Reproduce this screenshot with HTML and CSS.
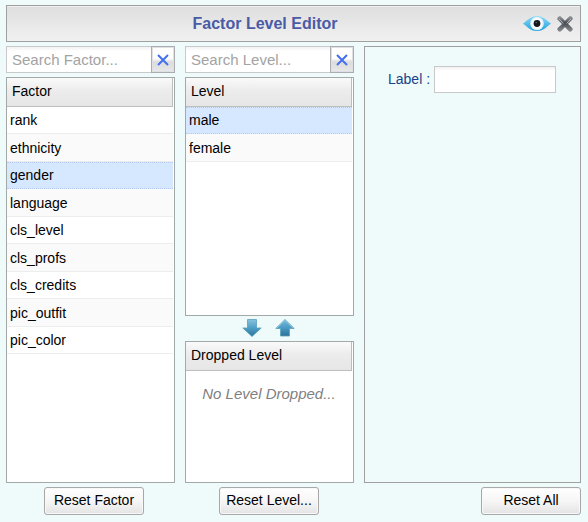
FILE: index.html
```html
<!DOCTYPE html>
<html lang="en">
<head>
<meta charset="utf-8">
<title>Factor Level Editor</title>
<link rel="stylesheet" href="styles.css">
</head>
<body>
<div class="editor">
  <header class="titlebar">
    <h1 class="title">Factor Level Editor</h1>
    <div class="tools">
      <button class="icon-button" type="button" aria-label="Preview">
        <svg width="28" height="18" viewBox="0 0 28 18">
          <defs><linearGradient id="eye" x1="0" y1="0" x2="0" y2="1"><stop offset="0" stop-color="#8fdcf8"/><stop offset="1" stop-color="#1fa0dc"/></linearGradient></defs>
          <path d="M0 8.500C5 5 8 1 14 1s9 4 14 7.500c-5 4-8 7.500-14 7.500S5 12.500 0 8.500z" fill="url(#eye)"/>
          <circle cx="14" cy="8.5" r="6.8" fill="#e0f0f7"/>
          <circle cx="14" cy="8.5" r="5.6" fill="#fafdff"/>
          <circle cx="14" cy="8.5" r="3.4" fill="#15191c"/>
          <circle cx="13.200" cy="7.500" r="0.7" fill="#6e767a"/>
        </svg>
      </button>
      <button class="icon-button" type="button" aria-label="Close">
        <svg width="16" height="16" viewBox="0 0 16 16">
          <defs><linearGradient id="cross" x1="0" y1="0" x2="0" y2="1"><stop offset="0" stop-color="#9a9ea2"/><stop offset=".45" stop-color="#454a50"/><stop offset="1" stop-color="#8f9397"/></linearGradient></defs>
          <path d="M3.500.7 8 5 12.500.7q1.500-.6 2.700 1 .4 1.200-.3 2L10.800 7.800l4.300 4.400q.8 1.400-.8 2.800-1.300.7-2.200 0L8 10.800 3.800 15q-1.300.8-2.700-.6-.8-1.200-.2-2.200L5.300 8 .8 3.500Q.3 2 1.600 1 2.600.3 3.500.7z" fill="url(#cross)" stroke="#6b7075" stroke-width=".6"/>
          <path d="M2 3l4.500 4.500M14 3 9.500 7.500" fill="none" stroke="#c3c7ca" stroke-width=".8"/>
        </svg>
      </button>
    </div>
  </header>

  <main class="columns">
    <section class="column">
      <div class="search">
        <input class="field search-field" type="text" placeholder="Search Factor..." aria-label="Search Factor">
        <button class="clear" type="button" aria-label="Clear factor search">
          <svg width="12" height="12" viewBox="0 0 12 12"><path d="M1 1l10 10M11 1l-10 10" stroke="#4470ee" stroke-width="2"/></svg>
        </button>
      </div>
      <div class="list">
        <table class="grid">
          <thead><tr><th scope="col">Factor</th></tr></thead>
          <tbody>
            <tr><td>rank</td></tr>
            <tr><td>ethnicity</td></tr>
            <tr class="selected"><td>gender</td></tr>
            <tr><td>language</td></tr>
            <tr><td>cls_level</td></tr>
            <tr><td>cls_profs</td></tr>
            <tr><td>cls_credits</td></tr>
            <tr><td>pic_outfit</td></tr>
            <tr><td>pic_color</td></tr>
          </tbody>
        </table>
      </div>
    </section>

    <section class="column">
      <div class="search">
        <input class="field search-field" type="text" placeholder="Search Level..." aria-label="Search Level">
        <button class="clear" type="button" aria-label="Clear level search">
          <svg width="12" height="12" viewBox="0 0 12 12"><path d="M1 1l10 10M11 1l-10 10" stroke="#4470ee" stroke-width="2"/></svg>
        </button>
      </div>
      <div class="list">
        <table class="grid">
          <thead><tr><th scope="col">Level</th></tr></thead>
          <tbody>
            <tr class="selected"><td>male</td></tr>
            <tr><td>female</td></tr>
          </tbody>
        </table>
      </div>
      <div class="movers">
        <button class="icon-button" type="button" aria-label="Drop level">
          <svg width="20" height="19" viewBox="0 0 20 19">
            <defs><linearGradient id="down" x1="0" y1="0" x2="0" y2="1"><stop offset="0" stop-color="#86c2dc"/><stop offset=".5" stop-color="#4d9fc6"/><stop offset="1" stop-color="#2b7299"/></linearGradient></defs>
            <path d="M5.500 .5h9v8.500h4.700L10 17.500 .8 9h4.700z" fill="url(#down)" stroke="#5b9fbd" stroke-width=".8"/>
          </svg>
        </button>
        <button class="icon-button" type="button" aria-label="Restore level">
          <svg width="20" height="19" viewBox="0 0 20 19">
            <defs><linearGradient id="up" x1="0" y1="0" x2="0" y2="1"><stop offset="0" stop-color="#7cbbdc"/><stop offset=".5" stop-color="#4a9bc3"/><stop offset="1" stop-color="#2a7198"/></linearGradient></defs>
            <path d="M5.500 17h9V9.500h4.700L10 .5 .8 9.500h4.700z" fill="url(#up)" stroke="#5b9fbd" stroke-width=".8"/>
            <path d="M2 9 10 1.300 18 9" fill="none" stroke="#92cbe6" stroke-width=".8"/>
          </svg>
        </button>
      </div>
      <div class="list dropped">
        <table class="grid">
          <thead><tr><th scope="col">Dropped Level</th></tr></thead>
        </table>
        <p class="empty">No Level Dropped...</p>
      </div>
    </section>

    <section class="details">
      <label class="label" for="level-label">Label :</label>
      <input class="field label-field" id="level-label" type="text">
    </section>
  </main>

  <footer class="actions">
    <button class="action" type="button">Reset Factor</button>
    <button class="action" type="button">Reset Level...</button>
    <button class="action" type="button">Reset All</button>
  </footer>
</div>
</body>
</html>
```
FILE: styles.css
```css
* {
  box-sizing: border-box;
}

body {
  margin: 0;
  background: #effbfb;
  color: #000;
  font: 14px/18px "Liberation Sans", Arial, sans-serif;
}

button,
input {
  margin: 0;
  font: inherit;
}

svg {
  display: block;
}

.editor {
  display: flex;
  flex-direction: column;
  gap: 4px;
  min-height: 100vh;
  padding: 5px 7px 7px 6px;
}

.titlebar {
  display: flex;
  align-items: center;
  height: 37px;
  padding-right: 7px;
  border: 1px solid #a0a0a0;
  background: linear-gradient(#dedede, #f1f1f1);
  box-shadow: inset 0 1px #efefef;
}

.title {
  flex: 1;
  margin: 0;
  color: #4a5ba5;
  font-size: 16px;
  font-weight: bold;
  text-align: center;
}

.tools {
  display: flex;
  align-items: center;
  gap: 6px;
}

.icon-button {
  padding: 0;
  border: 0;
  background: none;
}

.columns {
  display: grid;
  flex: 1;
  grid-template-columns: 169px 169px 1fr;
  gap: 10px;
}

.column {
  display: flex;
  flex-direction: column;
}

.search {
  display: flex;
  height: 27px;
  margin-bottom: 4px;
}

.field {
  min-width: 0;
  height: 27px;
  padding: 0 5px;
  border: 1px solid #c9c9c9;
  border-radius: 0;
  background: linear-gradient(#f1f1f1, #fff 4px);
}

.search-field {
  flex: 1;
  border-right: 0;
  font-size: 15px;
}

.search-field::placeholder {
  color: #a3a3a3;
}

.clear {
  display: grid;
  place-items: center;
  width: 24px;
  padding: 0;
  border: 1px solid #abadb3;
  background: linear-gradient(#fff 45%, #dcdcdc 60%, #e8e8e8);
  box-shadow: inset 0 0 0 1px #dfe0e4;
}

.list {
  flex: 1;
  padding-right: 1px;
  border: 1px solid #a3a8a8;
  background: #fff;
}

.dropped {
  flex: 0 0 142px;
}

.grid {
  width: 100%;
  border-collapse: separate;
  border-spacing: 0;
}

.grid th {
  height: 29px;
  padding: 0 5px 2px;
  border-right: 1px solid #bdbdbd;
  border-bottom: 1px solid #bdbdbd;
  background: linear-gradient(#fafafa, #ececec 45%, #e6e6e6);
  font-weight: normal;
  text-align: left;
}

.grid td {
  height: 28px;
  padding: 0 3px;
  border-bottom: 1px solid #ededed;
}

.grid tr:nth-child(odd) td {
  height: 27px;
}

.grid tr:nth-child(even) td {
  background: #fafafa;
}

.grid .selected td {
  padding-bottom: 2px;
  border-top: 1px dotted #b4caf0;
  border-bottom: 1px dotted #b4caf0;
  background: #d6e8ff;
}

.movers {
  display: flex;
  align-items: center;
  justify-content: center;
  gap: 13px;
  height: 25px;
  padding-right: 2px;
}

.empty {
  margin: 14px 0 0;
  color: #808080;
  font-size: 15px;
  font-style: italic;
  text-align: center;
}

.details {
  display: flex;
  align-items: flex-start;
  gap: 4px;
  padding: 19px 23px;
  border: 1px solid #a0a0a0;
}

.label {
  color: #15428b;
  line-height: 26px;
}

.label-field {
  flex: 0 1 122px;
}

.actions {
  display: flex;
  gap: 75px;
  padding-left: 38px;
}

.action {
  width: 100px;
  height: 28px;
  padding: 0 0 2px;
  border: 1px solid #a8a8a8;
  border-radius: 3px;
  background: linear-gradient(#fff, #f6f6f6 50%, #e4e4e4);
  box-shadow: inset 0 0 0 1px #f8f8f8;
  color: #000;
}

.action:last-child {
  margin-left: auto;
}
```
